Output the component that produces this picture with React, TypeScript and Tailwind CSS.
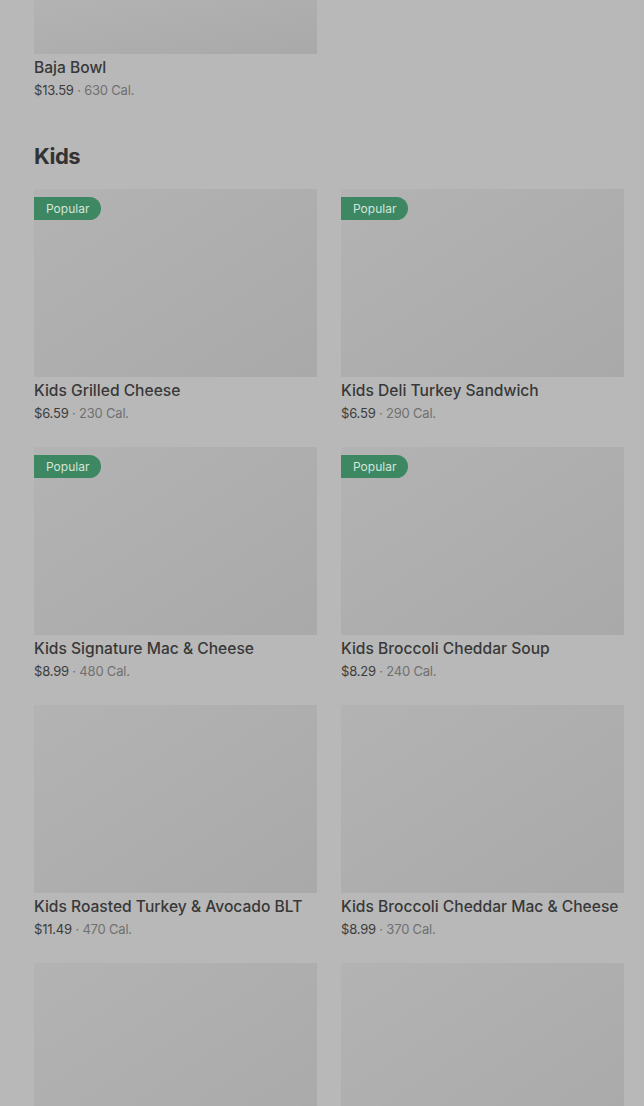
import React from 'react';

type Item = { name: string; price: string; cal: string; popular?: boolean };

const kids: Item[] = [
  { name: 'Kids Grilled Cheese', price: '$6.59', cal: '230 Cal.', popular: true },
  { name: 'Kids Deli Turkey Sandwich', price: '$6.59', cal: '290 Cal.', popular: true },
  { name: 'Kids Signature Mac & Cheese', price: '$8.99', cal: '480 Cal.', popular: true },
  { name: 'Kids Broccoli Cheddar Soup', price: '$8.29', cal: '240 Cal.', popular: true },
  { name: 'Kids Roasted Turkey & Avocado BLT', price: '$11.49', cal: '470 Cal.' },
  { name: 'Kids Broccoli Cheddar Mac & Cheese', price: '$8.99', cal: '370 Cal.' },
];

const Card: React.FC<{ item?: Item; imgClass?: string }> = ({ item, imgClass = 'h-[188px]' }) => (
  <div className="flex flex-col">
    <div className={`relative w-full bg-gradient-to-br from-[#b3b3b3] to-[#a9a9a9] ${imgClass}`}>
      {item?.popular && (
        <span className="absolute left-0 top-[8px] h-[23px] px-[12px] flex items-center rounded-r-full bg-[#3e8763] text-[12px] text-[#d3e6da]">
          Popular
        </span>
      )}
    </div>
    {item && (
      <>
        <div className="mt-1 text-[15.6px] leading-[20px] font-medium text-[#383838] whitespace-nowrap">{item.name}</div>
        <div className="mt-0.5 text-[13px] leading-[20px] whitespace-nowrap tracking-[-0.2px]">
          <span className="text-[#3c3c3c]">{item.price}</span>
          <span className="text-[#707070]"> · {item.cal}</span>
        </div>
      </>
    )}
  </div>
);

export default function App() {
  return (
    <div className="min-h-[1106px] h-[1106px] overflow-hidden bg-[#b8b8b8] pl-[34px] pr-[20px] font-['Inter',sans-serif]">
      <div className="grid grid-cols-2 gap-x-[24px]">
        <Card item={{ name: 'Baja Bowl', price: '$13.59', cal: '630 Cal.' }} imgClass="h-[54px]" />
      </div>

      <h2 className="mt-[42px] text-[22px] leading-[28px] font-bold tracking-[-0.5px] text-[#333333]">Kids</h2>

      <div className="mt-[19px] grid grid-cols-2 gap-x-[24px] gap-y-[24px]">
        {kids.map((it) => (
          <Card key={it.name} item={it} />
        ))}
        <Card imgClass="h-[188px]" />
        <Card imgClass="h-[188px]" />
      </div>
    </div>
  );
}
